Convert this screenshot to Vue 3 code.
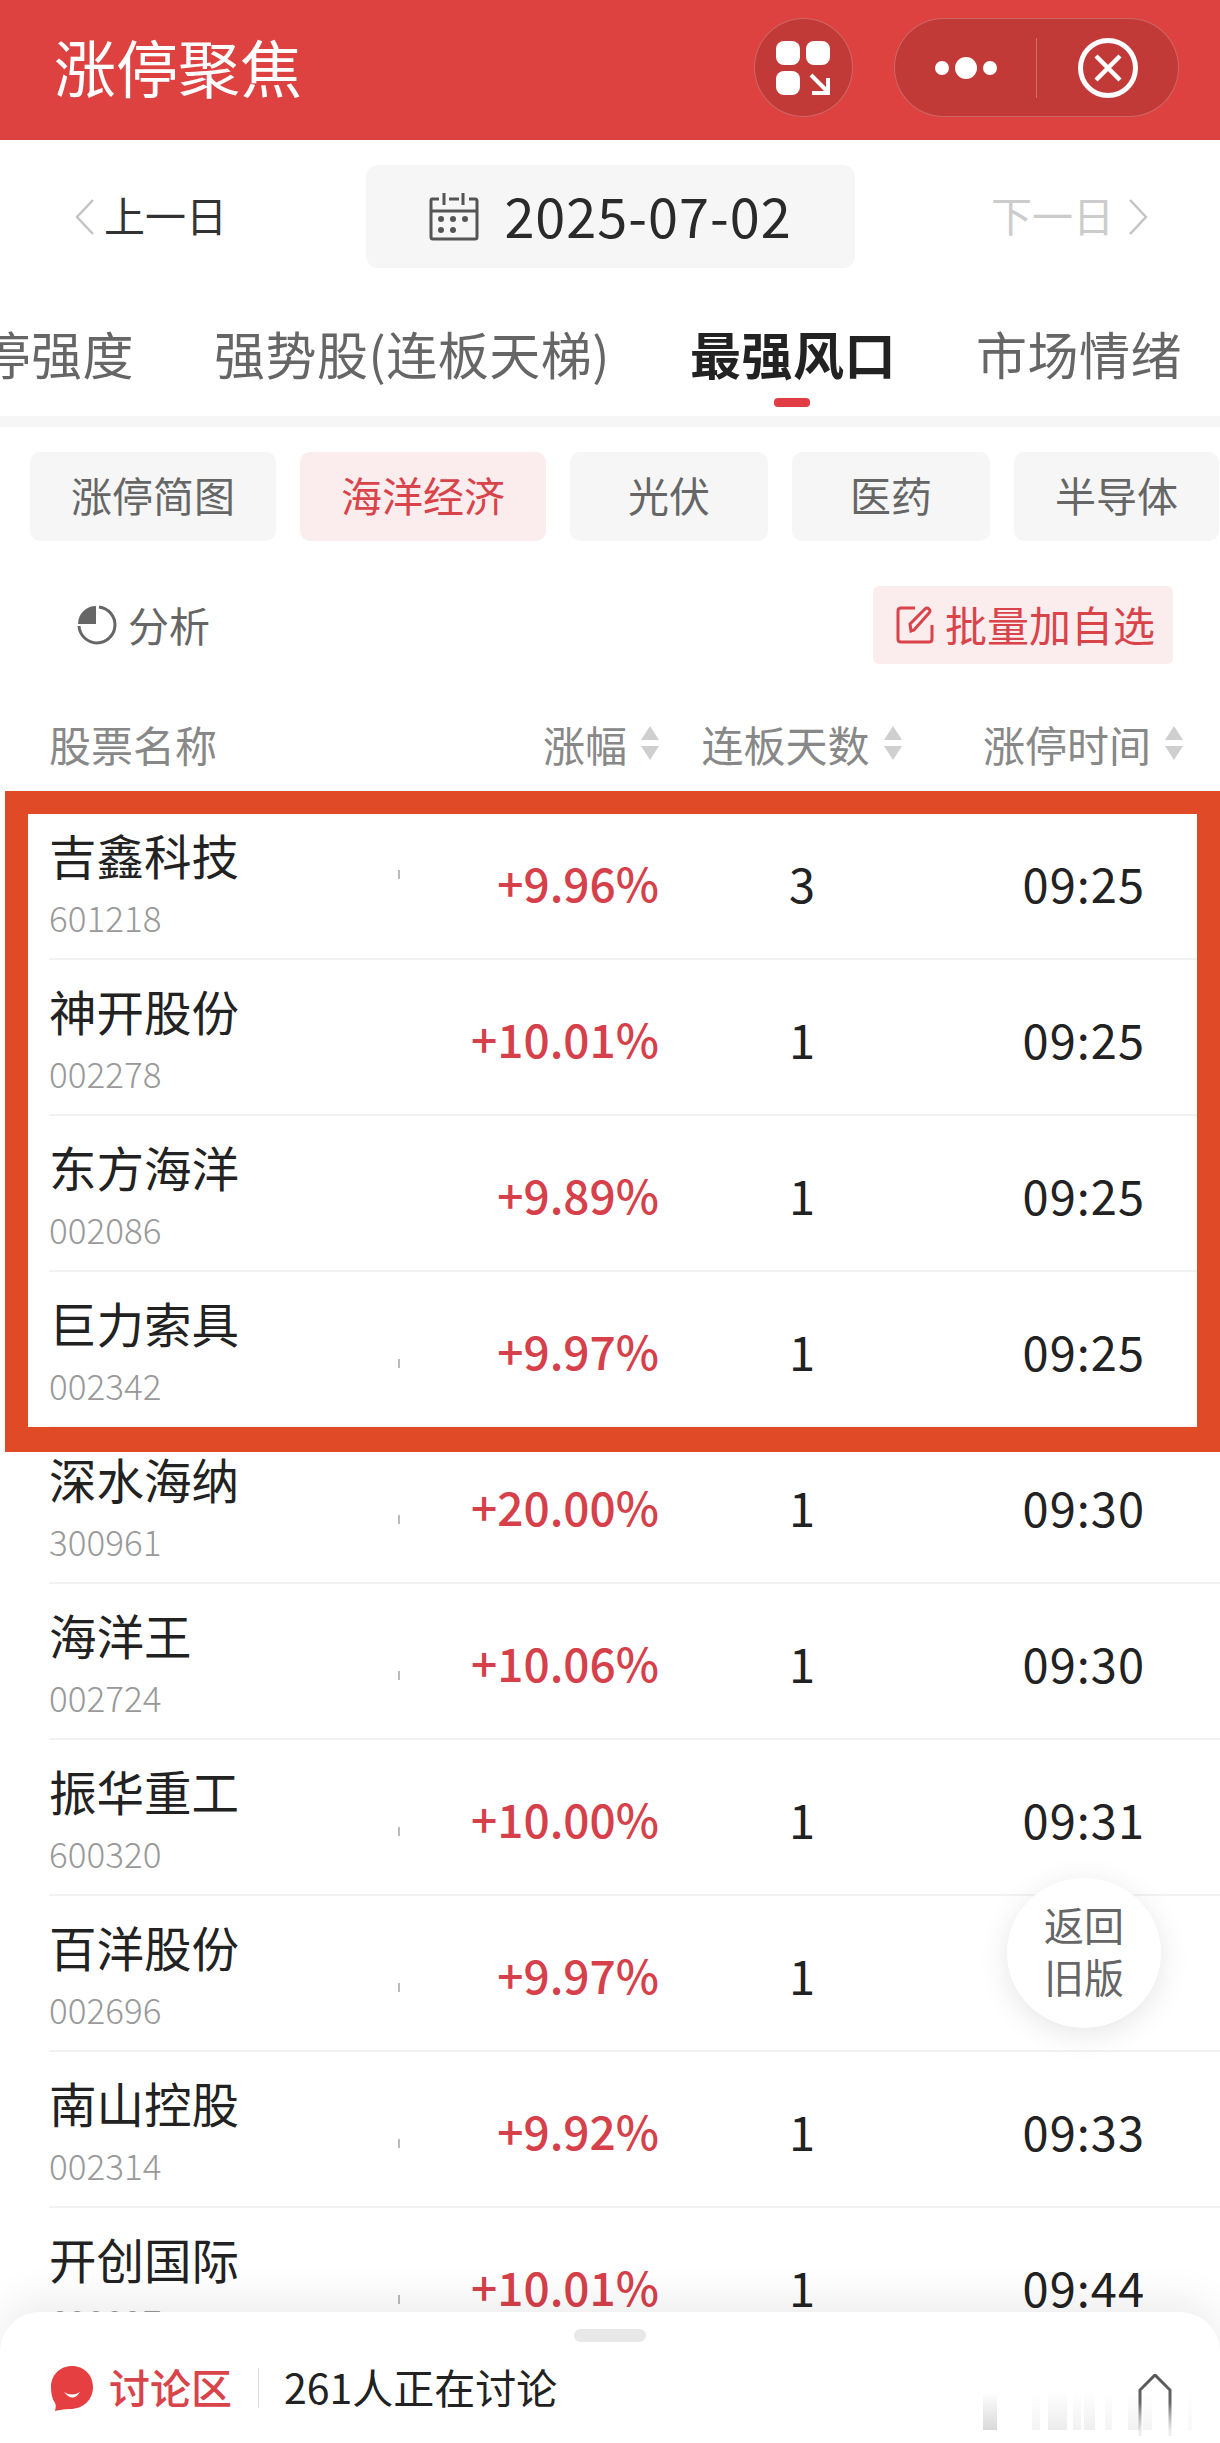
<script setup>
const tabs = ['涨停强度', '强势股(连板天梯)', '最强风口', '市场情绪'];
const chips = ['涨停简图', '海洋经济', '光伏', '医药', '半导体'];

// tick 是名称列右侧那条很短的竖线，相对行中心的偏移
const rows = [
  { name: '吉鑫科技', code: '601218', pct: '+9.96%', days: 3, time: '09:25', tick: -11 },
  { name: '神开股份', code: '002278', pct: '+10.01%', days: 1, time: '09:25', tick: 0 },
  { name: '东方海洋', code: '002086', pct: '+9.89%', days: 1, time: '09:25', tick: 0 },
  { name: '巨力索具', code: '002342', pct: '+9.97%', days: 1, time: '09:25', tick: 10 },
  { name: '深水海纳', code: '300961', pct: '+20.00%', days: 1, time: '09:30', tick: 10 },
  { name: '海洋王', code: '002724', pct: '+10.06%', days: 1, time: '09:30', tick: 10 },
  { name: '振华重工', code: '600320', pct: '+10.00%', days: 1, time: '09:31', tick: 10 },
  { name: '百洋股份', code: '002696', pct: '+9.97%', days: 1, time: '09:32', tick: 10 },
  { name: '南山控股', code: '002314', pct: '+9.92%', days: 1, time: '09:33', tick: 10 },
  { name: '开创国际', code: '600097', pct: '+10.01%', days: 1, time: '09:44', tick: 10 },
];

// 底部浮层右下角残留的淡色竖条
const smudges = [
  { x: 23, w: 14, o: 0.28 },
  { x: 72, w: 8, o: 0.08 },
  { x: 88, w: 19, o: 0.14 },
  { x: 113, w: 8, o: 0.1 },
  { x: 124, w: 11, o: 0.12 },
  { x: 145, w: 7, o: 0.08 },
  { x: 168, w: 12, o: 0.1 },
  { x: 183, w: 9, o: 0.08 },
  { x: 228, w: 19, o: 0.05 },
];
</script>

<template>
  <div class="page">
    <header class="topbar">
      <div class="title">涨停聚焦</div>
      <div class="round-btn">
        <svg width="56" height="54" viewBox="0 0 56 54">
          <rect x="0" y="0" width="24" height="24" rx="8" fill="#fff" />
          <rect x="30" y="0" width="24" height="24" rx="8" fill="#fff" />
          <rect x="0" y="30" width="24" height="24" rx="8" fill="#fff" />
          <path d="M35 34 L52 51 M52 37 V52 H36" fill="none" stroke="#fff" stroke-width="4" />
        </svg>
      </div>
      <div class="capsule">
        <div class="capsule-part">
          <svg width="62" height="24" viewBox="0 0 62 24">
            <circle cx="7" cy="12" r="7" fill="#fff" />
            <circle cx="31" cy="12" r="11" fill="#fff" />
            <circle cx="55" cy="12" r="7" fill="#fff" />
          </svg>
        </div>
        <div class="capsule-line"></div>
        <div class="capsule-part">
          <svg width="62" height="62" viewBox="0 0 62 62">
            <circle cx="31" cy="31" r="27.5" fill="none" stroke="#fff" stroke-width="5" />
            <path d="M19 19 L43 43 M43 19 L19 43" fill="none" stroke="#fff" stroke-width="4.5" />
          </svg>
        </div>
      </div>
    </header>

    <div class="date-nav">
      <div class="day-link">
        <svg width="21" height="36" viewBox="0 0 21 36">
          <path d="M19 1 L3 18 L19 35" fill="none" stroke="#c4c4c4" stroke-width="2.5" />
        </svg>
        <span>上一日</span>
      </div>
      <div class="date-box">
        <svg width="50" height="50" viewBox="0 0 50 50">
          <path d="M10 7 H3 Q2 7 2 9 V45 Q2 47 4 47 H46 Q48 47 48 45 V9 Q48 7 46 7 H40" fill="none" stroke="#555" stroke-width="3" />
          <path d="M20 7 H30 M2 19 H48 M15 1 V13 M34 1 V13" fill="none" stroke="#555" stroke-width="3" />
          <circle cx="12" cy="27" r="3" fill="#555" />
          <circle cx="24" cy="27" r="3" fill="#555" />
          <circle cx="36" cy="27" r="3" fill="#555" />
          <circle cx="12" cy="38" r="3" fill="#555" />
          <circle cx="24" cy="38" r="3" fill="#555" />
        </svg>
        <span class="date-text">2025-07-02</span>
      </div>
      <div class="day-link next">
        <span>下一日</span>
        <svg width="21" height="36" viewBox="0 0 21 36">
          <path d="M2 1 L18 18 L2 35" fill="none" stroke="#c4c4c4" stroke-width="2.5" />
        </svg>
      </div>
    </div>

    <nav class="tabs">
      <div v-for="t in tabs" :key="t" class="tab" :class="{ active: t === '最强风口' }">{{ t }}</div>
    </nav>

    <div class="chips">
      <div v-for="c in chips" :key="c" class="chip" :class="{ on: c === '海洋经济' }">{{ c }}</div>
    </div>

    <div class="toolbar">
      <div class="analyse">
        <svg width="40" height="40" viewBox="0 0 40 40">
          <path d="M22 2 A18 18 0 1 1 2 21" fill="none" stroke="#666" stroke-width="3" />
          <path d="M19 1 V19 H1 A18 18 0 0 1 19 1 Z" fill="#666" />
        </svg>
        <span>分析</span>
      </div>
      <div class="batch">
        <svg width="38" height="38" viewBox="0 0 38 38">
          <path d="M19 2 H5 Q2 2 2 5 V33 Q2 36 5 36 H33 Q36 36 36 33 V19" fill="none" stroke="#d9434a" stroke-width="3" />
          <path d="M15 25 L14 18 L29 3 Q31 1 33 3 Q35 5 33 7 L18 24 Z" fill="none" stroke="#d9434a" stroke-width="3" />
        </svg>
        <span>批量加自选</span>
      </div>
    </div>

    <div class="thead">
      <div class="th-name">股票名称</div>
      <div class="th">
        涨幅
        <svg class="sort" width="20" height="36" viewBox="0 0 20 36">
          <path d="M10 1 L19 15 H1 Z M10 35 L1 21 H19 Z" fill="#cfcfcf" />
        </svg>
      </div>
      <div class="th center">
        连板天数
        <svg class="sort" width="20" height="36" viewBox="0 0 20 36">
          <path d="M10 1 L19 15 H1 Z M10 35 L1 21 H19 Z" fill="#cfcfcf" />
        </svg>
      </div>
      <div class="th">
        涨停时间
        <svg class="sort" width="20" height="36" viewBox="0 0 20 36">
          <path d="M10 1 L19 15 H1 Z M10 35 L1 21 H19 Z" fill="#cfcfcf" />
        </svg>
      </div>
    </div>

    <div class="tbody">
      <div v-for="r in rows" :key="r.code" class="row">
        <div class="name-cell">
          <div class="name">{{ r.name }}</div>
          <div class="code">{{ r.code }}</div>
          <i v-if="r.tick" class="tick" :style="{ top: `calc(50% + ${r.tick}px)` }"></i>
        </div>
        <div class="pct">{{ r.pct }}</div>
        <div class="days">{{ r.days }}</div>
        <div class="time">{{ r.time }}</div>
      </div>
    </div>

    <div class="red-frame"></div>

    <div class="old-btn">返回<br />旧版</div>

    <div class="sheet">
      <div class="handle"></div>
      <div class="sheet-row">
        <svg width="44" height="46" viewBox="0 0 44 46">
          <path d="M22 1 C34 1 43 10 43 22 C43 35 33 44 20 44 C14 44 9 45 5 46 C6 42 6 40 5 38 C2 34 1 28 1 22 C1 10 10 1 22 1 Z" fill="#e63f42" />
          <path d="M14 27 Q22 32 30 27 Q23 38 14 27 Z" fill="#fff" />
        </svg>
        <span class="talk">讨论区</span>
        <i class="sheet-line"></i>
        <span class="talk-count">261人正在讨论</span>
      </div>
      <svg class="smudge" width="232" height="62" viewBox="0 0 232 62">
        <defs>
          <linearGradient id="fade" x1="0" y1="0" x2="0" y2="1">
            <stop offset="0" stop-color="#777" stop-opacity="0" />
            <stop offset="1" stop-color="#777" stop-opacity="1" />
          </linearGradient>
          <linearGradient id="fade2" gradientUnits="userSpaceOnUse" x1="0" y1="0" x2="0" y2="58">
            <stop offset="0" stop-color="#555" />
            <stop offset="0.5" stop-color="#666" />
            <stop offset="1" stop-color="#aaa" stop-opacity="0.2" />
          </linearGradient>
        </defs>
        <rect v-for="s in smudges" :key="s.x" :x="s.x" y="18" :width="s.w" height="38" fill="url(#fade)" :opacity="s.o" />
        <path d="M180 62 V16 L195 1 L210 16 V62" fill="none" stroke="url(#fade2)" stroke-width="3" />
      </svg>
    </div>
  </div>
</template>

<style scoped>
.page {
  position: relative;
  width: 1220px;
  height: 2443px;
  overflow: hidden;
  background: #fff;
  font-family: "Noto Sans CJK SC", "Noto Sans", sans-serif;
  color: #222;
}
.topbar {
  height: 140px;
  box-sizing: border-box;
  padding: 18px 41px 0 54px;
  background: #dd4240;
  display: flex;
  align-items: flex-start;
}
.title {
  flex: 1;
  height: 97px;
  line-height: 97px;
  font-size: 62px;
  color: #fff;
}
.round-btn {
  width: 99px;
  height: 99px;
  box-sizing: border-box;
  border: 1px solid rgba(255, 255, 255, 0.22);
  border-radius: 50%;
  background: #c23a38;
  display: flex;
  align-items: center;
  justify-content: center;
}
.capsule {
  width: 285px;
  height: 99px;
  margin-left: 41px;
  box-sizing: border-box;
  border: 1px solid rgba(255, 255, 255, 0.22);
  border-radius: 50px;
  background: #c23a38;
  display: flex;
  align-items: center;
}
.capsule-part {
  flex: 1;
  display: flex;
  align-items: center;
  justify-content: center;
}
.capsule-line {
  width: 1px;
  height: 60px;
  background: rgba(255, 255, 255, 0.25);
}
.date-nav {
  height: 103px;
  margin-top: 25px;
  padding: 0 71px 0 74px;
  display: flex;
  align-items: center;
  justify-content: space-between;
}
.day-link {
  display: flex;
  align-items: center;
  gap: 9px;
  font-size: 41px;
  line-height: 50px;
  color: #333;
}
.day-link span {
  margin-top: -5px;
}
.day-link.next {
  gap: 14px;
  color: #ccc;
}
.date-box {
  width: 489px;
  height: 103px;
  margin-left: 3px;
  border-radius: 12px;
  background: #f6f6f6;
  display: flex;
  align-items: center;
  justify-content: center;
  gap: 25px;
}
.date-text {
  margin-top: -5px;
  font-size: 54px;
  letter-spacing: 1px;
  color: #2a2a2a;
}
.tabs {
  margin-top: 59px;
  margin-left: -72px;
  display: flex;
  gap: 80px;
  white-space: nowrap;
}
.tab {
  position: relative;
  height: 89px;
  line-height: 52px;
  font-size: 51px;
  letter-spacing: 0.5px;
  color: #666;
}
.tab.active {
  color: #222;
  font-weight: 700;
}
.tab.active::after {
  content: '';
  position: absolute;
  left: 84px;
  bottom: 9px;
  width: 36px;
  height: 9px;
  border-radius: 4px;
  background: #e03e44;
}
.chips {
  border-top: 11px solid #f6f6f6;
  padding: 25px 0 0 30px;
  display: flex;
  gap: 24px;
}
.chip {
  flex: none;
  min-width: 198px;
  height: 89px;
  box-sizing: border-box;
  padding: 0 41px;
  border-radius: 10px;
  background: #f6f6f6;
  font-size: 41px;
  line-height: 85px;
  text-align: center;
  color: #666;
}
.chip.on {
  background: #fbecee;
  color: #d9434a;
}
.toolbar {
  height: 78px;
  margin-top: 45px;
  padding: 0 47px 0 77px;
  display: flex;
  align-items: center;
  justify-content: space-between;
}
.analyse {
  display: flex;
  align-items: center;
  gap: 11px;
  font-size: 41px;
  line-height: 50px;
  color: #666;
}
.analyse span {
  margin-top: -3px;
}
.batch {
  width: 300px;
  height: 78px;
  box-sizing: border-box;
  padding-left: 23px;
  border-radius: 6px;
  background: #fbecee;
  display: flex;
  align-items: center;
  gap: 11px;
  font-size: 42px;
  color: #d9434a;
}
.batch span {
  margin-top: -3px;
}
.thead {
  height: 76px;
  margin-top: 41px;
  margin-bottom: 23px;
  padding-left: 49px;
  display: grid;
  grid-template-columns: 351px 260px 284px 240px;
  align-items: center;
  font-size: 42px;
  color: #888;
}
.th {
  display: flex;
  align-items: center;
  justify-content: flex-end;
  gap: 13px;
}
.th.center {
  justify-content: center;
}
.row {
  height: 156px;
  box-sizing: border-box;
  margin-left: 49px;
  border-bottom: 2px solid #f2f2f2;
  display: grid;
  grid-template-columns: 351px 259px 286px 200px;
  align-items: center;
  font-size: 47px;
}
.name-cell {
  position: relative;
  align-self: stretch;
  padding-top: 23px;
}
.name {
  font-size: 47.5px;
  line-height: 56px;
  color: #222;
}
.code {
  margin-top: 14px;
  font-size: 35px;
  line-height: 40px;
  font-weight: 300;
  color: #999;
}
.tick {
  position: absolute;
  right: 0;
  width: 2px;
  height: 9px;
  background: #bbb;
}
.pct {
  text-align: right;
  font-weight: 500;
  font-size: 46px;
  color: #d6404a;
  padding-top: 2px;
}
.days {
  text-align: center;
  padding-top: 2px;
}
.time {
  text-align: right;
  letter-spacing: 1px;
  padding-top: 2px;
}
.red-frame {
  position: absolute;
  left: 5px;
  top: 791px;
  width: 1215px;
  height: 661px;
  box-sizing: border-box;
  border-style: solid;
  border-color: #e04a27;
  border-width: 23px 23px 25px 23px;
}
.old-btn {
  position: absolute;
  left: 1007px;
  top: 1878px;
  width: 154px;
  height: 150px;
  box-sizing: border-box;
  padding-top: 20px;
  border-radius: 50%;
  background: #fff;
  box-shadow: 0 6px 30px rgba(0, 0, 0, 0.1);
  text-align: center;
  font-size: 40px;
  line-height: 52px;
  color: #666;
}
.sheet {
  position: absolute;
  left: 0;
  right: 0;
  bottom: 0;
  height: 131px;
  border-radius: 40px 40px 0 0;
  background: #fff;
  box-shadow: 0 -14px 40px rgba(0, 0, 0, 0.07);
}
.handle {
  position: absolute;
  left: 574px;
  top: 17px;
  width: 72px;
  height: 13px;
  border-radius: 7px;
  background: #e8e8e8;
}
.sheet-row {
  position: absolute;
  left: 50px;
  top: 52px;
  display: flex;
  align-items: center;
  font-size: 41px;
  line-height: 52px;
}
.talk {
  margin-left: 15px;
  margin-top: -4px;
  color: #d9434a;
  font-weight: 500;
}
.sheet-line {
  width: 1px;
  height: 40px;
  margin: 0 25px 0 26px;
  background: #ddd;
}
.talk-count {
  margin-top: -4px;
  color: #222;
}
.smudge {
  position: absolute;
  left: 960px;
  top: 62px;
}
</style>

<style>
html,
body {
  margin: 0;
  background: #fff;
}
</style>
